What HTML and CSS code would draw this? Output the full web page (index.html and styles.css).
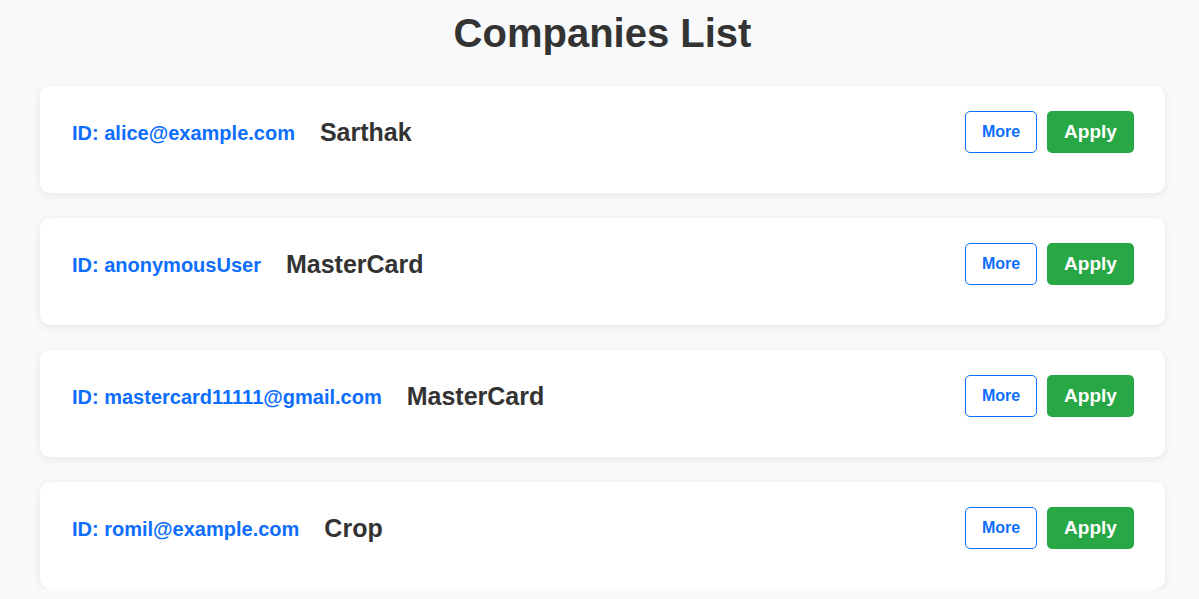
FILE: index.html
```html
<!DOCTYPE html>
<html>
<head>
<meta charset="utf-8">
<link rel="stylesheet" href="styles.css">
</head>
<body>
<h1 class="title">Companies List</h1>
<div class="list">
  <div class="card">
    <div class="info"><span class="cid">ID: alice@example.com</span><span class="cname">Sarthak</span></div>
    <div class="actions"><button class="btn-more">More</button><button class="btn-apply">Apply</button></div>
  </div>
  <div class="card">
    <div class="info"><span class="cid">ID: anonymousUser</span><span class="cname">MasterCard</span></div>
    <div class="actions"><button class="btn-more">More</button><button class="btn-apply">Apply</button></div>
  </div>
  <div class="card">
    <div class="info"><span class="cid">ID: mastercard11111@gmail.com</span><span class="cname">MasterCard</span></div>
    <div class="actions"><button class="btn-more">More</button><button class="btn-apply">Apply</button></div>
  </div>
  <div class="card">
    <div class="info"><span class="cid">ID: romil@example.com</span><span class="cname">Crop</span></div>
    <div class="actions"><button class="btn-more">More</button><button class="btn-apply">Apply</button></div>
  </div>
</div>
</body>
</html>
```

FILE: styles.css
```css
html, body {
  margin: 0;
  padding: 0;
  background: #f8f9fa;
  font-family: "Liberation Sans", Arial, sans-serif;
  color: #333;
}
.title {
  margin: 10px 0 0;
  padding-left: 6px;
  height: 76px;
  line-height: 46px;
  font-size: 40px;
  font-weight: bold;
  text-align: center;
  color: #333;
}
.list {
  display: flex;
  flex-direction: column;
  gap: 25px;
  margin-left: 40px;
  width: 1125px;
}
.card {
  background: #fff;
  border-radius: 10px;
  box-shadow: 0 2px 8px rgba(0,0,0,0.08);
  padding: 25px 31px 40px 32px;
  display: flex;
  justify-content: space-between;
  align-items: center;
}
.info {
  display: flex;
  align-items: center;
  gap: 25px;
}
.cid {
  color: #0d6efd;
  font-size: 20px;
  font-weight: bold;
  position: relative;
  top: 1px;
}
.cname {
  font-size: 25px;
  font-weight: bold;
  color: #333;
}
.actions {
  display: flex;
  gap: 10px;
}
button {
  font-family: "Liberation Sans", Arial, sans-serif;
  font-weight: bold;
  height: 42px;
  border-radius: 5px;
  cursor: pointer;
}
.btn-more {
  width: 72px;
  background: #fff;
  color: #0d6efd;
  border: 1px solid #0d6efd;
  font-size: 16px;
}
.btn-apply {
  width: 87px;
  background: #28a745;
  color: #fff;
  border: none;
  font-size: 19px;
}
```
